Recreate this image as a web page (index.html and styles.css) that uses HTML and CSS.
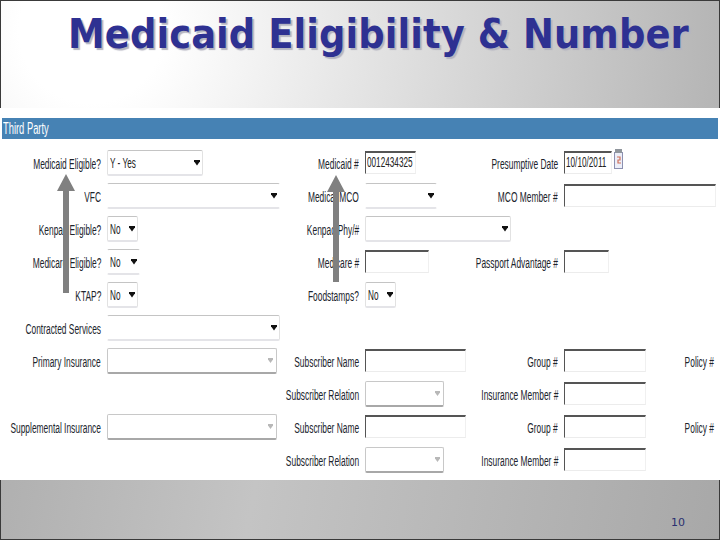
FILE: index.html
```html
<!DOCTYPE html>
<html lang="en">
<head>
<meta charset="utf-8">
<title>Medicaid Eligibility &amp; Number</title>
<link rel="stylesheet" href="styles.css">
</head>
<body>
<div class="slide">
  <header class="head"><h1 class="title">Medicaid Eligibility &amp; Number</h1></header>
  <main class="content">
    <div class="band"><span class="nar">Third Party</span></div>
    <div class="form">
      <div class="lbl c1">Medicaid Eligible?</div>
      <div class="sel c2 w96"><span class="nar">Y - Yes</span><i class="arr"></i></div>
      <div class="lbl c3">Medicaid #</div>
      <div class="inp c4 w51"><span class="nar">0012434325</span></div>
      <div class="lbl c5">Presumptive Date</div>
      <div class="date c6">
        <div class="inp w48"><span class="nar">10/10/2011</span></div>
        <svg class="cal" width="11" height="21" viewBox="0 0 11 21"><rect x="1.500" y="3.500" width="8" height="16" fill="#eceef8" stroke="#8c90b0"/><rect x="2" y="0" width="7" height="4" fill="#8f959c"/><path d="M4 8h3v3H5v3h3" fill="none" stroke="#d0705a" stroke-width="1.200"/></svg>
      </div>

      <div class="lbl c1">VFC</div>
      <div class="sel c2 w173 open"><span></span><i class="arr"></i></div>
      <div class="lbl c3">Medical MCO</div>
      <div class="sel c4 w72 open"><span></span><i class="arr"></i></div>
      <div class="lbl c5">MCO Member #</div>
      <div class="inp c6 w152 s2"></div>

      <div class="lbl c1">Kenpac Eligible?</div>
      <div class="sel c2 w31"><span class="nar">No</span><i class="arr"></i></div>
      <div class="lbl c3">Kenpac Phy/#</div>
      <div class="sel c4 w146 s3"><span></span><i class="arr"></i></div>

      <div class="lbl c1">Medicare Eligible?</div>
      <div class="sel c2 w33 open"><span class="nar">No</span><i class="arr"></i></div>
      <div class="lbl c3">Medicare #</div>
      <div class="inp c4 w64"></div>
      <div class="lbl c5">Passport Advantage #</div>
      <div class="inp c6 w45"></div>

      <div class="lbl c1">KTAP?</div>
      <div class="sel c2 w31"><span class="nar">No</span><i class="arr"></i></div>
      <div class="lbl c3">Foodstamps?</div>
      <div class="sel c4 w31"><span class="nar">No</span><i class="arr"></i></div>

      <div class="lbl c1">Contracted Services</div>
      <div class="sel c2 w173 open-l"><span></span><i class="arr"></i></div>

      <div class="lbl c1">Primary Insurance</div>
      <div class="sel c2 w170 off"><span></span><i class="arr"></i></div>
      <div class="lbl c3">Subscriber Name</div>
      <div class="inp c4 w101"></div>
      <div class="lbl c5">Group #</div>
      <div class="inp c6 w82"></div>
      <div class="lbl c7">Policy #</div>

      <div class="lbl c3">Subscriber Relation</div>
      <div class="sel c4 w79 off"><span></span><i class="arr"></i></div>
      <div class="lbl c5">Insurance Member #</div>
      <div class="inp c6 w82"></div>

      <div class="lbl c1">Supplemental Insurance</div>
      <div class="sel c2 w170 off"><span></span><i class="arr"></i></div>
      <div class="lbl c3">Subscriber Name</div>
      <div class="inp c4 w101"></div>
      <div class="lbl c5">Group #</div>
      <div class="inp c6 w82"></div>
      <div class="lbl c7">Policy #</div>

      <div class="lbl c3">Subscriber Relation</div>
      <div class="sel c4 w79 off"><span></span><i class="arr"></i></div>
      <div class="lbl c5">Insurance Member #</div>
      <div class="inp c6 w82"></div>
    </div>
    <svg class="pointer p1" width="20" height="120" viewBox="0 0 20 120"><path d="M10 0L19 17H13V119H7V17H1Z" fill="#808080"/></svg>
    <svg class="pointer p2" width="20" height="108" viewBox="0 0 20 108"><path d="M10 0L19 17H13V107H7V17H1Z" fill="#808080"/></svg>
  </main>
  <footer class="foot"><span class="page">10</span></footer>
</div>
</body>
</html>
```
FILE: styles.css
```css
* { box-sizing: border-box; }
html, body { margin: 0; padding: 0; }
body { width: 720px; height: 540px; overflow: hidden; }
.slide {
  position: relative;
  width: 720px;
  height: 540px;
  display: flex;
  flex-direction: column;
  border: 1px solid #3a3a3a;
  background: #b8b8b8;
}
.head {
  height: 107px;
  padding: 9px 0 0 67px;
  margin: 0;
  background: radial-gradient(circle 720px at 90px 30px, #ffffff 0, #ffffff 10%, #a9a9a9 100%);
}
.title {
  margin: 0;
  font: bold 41px/48px "DejaVu Sans", sans-serif;
  font-stretch: condensed;
  letter-spacing: 0.1px;
  color: #2e3192;
  text-shadow: 2px 2px 1px #b4b4c0;
  white-space: nowrap;
}
.content {
  position: relative;
  height: 372px;
  margin: 0 -1px;
  background: #fff;
  padding: 10px 0 0 0;
}
.band {
  height: 21px;
  margin: 0 2px;
  padding-left: 1px;
  background: #4682b4;
  color: #fff;
  font: 16px/21px "Liberation Sans", sans-serif;
}
.form {
  display: grid;
  grid-template-columns: 101px 173px 73px 99px 88px 82px 62px;
  grid-auto-rows: 33px;
  column-gap: 6px;
  align-items: center;
  margin-top: 8px;
  font: 14px/16px "Liberation Sans", sans-serif;
  color: #222;
}
.nar { display: inline-block; transform: scaleX(0.585); transform-origin: left center; white-space: nowrap; }
.lbl {
  margin-top: 1px;
  white-space: nowrap;
  justify-self: end;
  color: #20242c;
  transform: scaleX(0.6);
  transform-origin: right center;
}
.c1 { grid-column: 1; }
.c2 { grid-column: 2; }
.c3 { grid-column: 3; }
.c4 { grid-column: 4; }
.c5 { grid-column: 5; }
.c6 { grid-column: 6; }
.c7 { grid-column: 7; }
.s2 { grid-column: 6 / span 2; }
.s3 { grid-column: 4 / span 2; }
.sel, .inp { justify-self: start; background: #fff; white-space: nowrap; }
.sel {
  height: 26px;
  margin-bottom: 1px;
  display: flex;
  align-items: center;
  padding: 0 2px 0 2px;
  border: 1px solid #e2e2e2;
  border-top-color: #c4c4c4;
  border-bottom: 2px solid #e4e4e8;
  border-radius: 2px;
}
.sel .arr { margin-left: auto; }
.sel .nar { width: 10px; }
.open { border-left-color: transparent; border-right-color: transparent; }
.open-l { border-left-color: transparent; }
.off { border-color: #c8c8c8; border-bottom-color: #a8a8a8; }
.arr {
  width: 6px;
  height: 6px;
  background: #111;
  clip-path: polygon(0 0, 100% 0, 100% 30%, 50% 100%, 0 30%);
}
.off .arr { width: 5px; height: 5px; margin-right: 1px; background: #b8b8b8; }
.inp {
  height: 23px;
  margin-bottom: 2px;
  padding: 1px 0 0 1px;
  border-top: 2px solid #555;
  border-left: 1px solid #555;
  border-right: 1px solid #f0f0f0;
  border-bottom: 1px solid #ececec;
}
.date { display: flex; align-items: center; gap: 1px; }
.cal { margin-bottom: 8px; }
.w31 { width: 31px; }
.w33 { width: 33px; }
.w45 { width: 45px; }
.w48 { width: 48px; }
.w51 { width: 51px; }
.w64 { width: 64px; }
.w72 { width: 72px; }
.w79 { width: 79px; }
.w82 { width: 82px; }
.w96 { width: 96px; }
.w101 { width: 101px; }
.w146 { width: 146px; }
.w152 { width: 152px; }
.w170 { width: 170px; }
.w173 { width: 173px; }
.pointer { position: absolute; }
.p1 { left: 56px; top: 66px; }
.p2 { left: 326px; top: 67px; }
.foot {
  flex: 1;
  margin: 0;
  display: flex;
  justify-content: flex-end;
  align-items: flex-end;
  padding: 0 34px 8px 0;
  background: linear-gradient(100deg, #b0b0b0 0, #c4c4c4 35%, #a8a8a8 100%);
}
.page { font: 11px/16px "DejaVu Sans", sans-serif; color: #2a2f70; }
```
